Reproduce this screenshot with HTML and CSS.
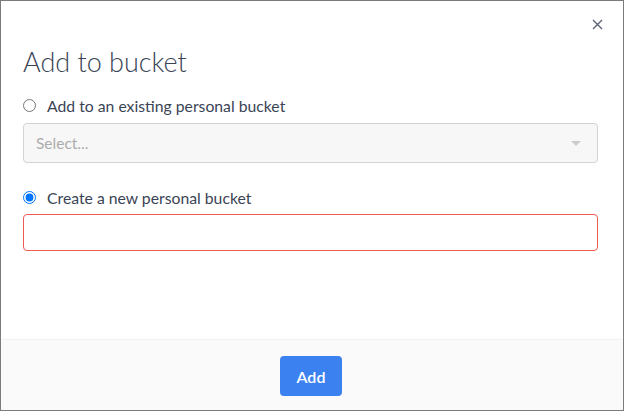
FILE: index.html
```html
<!DOCTYPE html>
<html>
<head>
<meta charset="utf-8">
<link rel="stylesheet" href="styles.css">
</head>
<body>
<div class="modal">
  <button class="close" aria-label="Close">
    <svg width="11" height="11" viewBox="0 0 11 11"><path d="M1 1L10 10M10 1L1 10" stroke="#5b6576" stroke-width="1.4" fill="none"/></svg>
  </button>
  <div class="modal-body">
    <h1 class="title">Add to bucket</h1>
    <label class="radio-row first">
      <input type="radio" name="mode" class="radio">
      <span class="radio-label">Add to an existing personal bucket</span>
    </label>
    <div class="select">
      <span class="placeholder">Select...</span>
      <span class="caret"></span>
    </div>
    <label class="radio-row second">
      <input type="radio" name="mode" class="radio" checked>
      <span class="radio-label">Create a new personal bucket</span>
    </label>
    <input type="text" class="text-input">
  </div>
  <div class="modal-footer">
    <button class="btn-add">Add</button>
  </div>
</div>
</body>
</html>
```
FILE: styles.css
```css
html, body {
  margin: 0;
  padding: 0;
  background: #ffffff;
}
body {
  font-family: Lato, "Open Sans", sans-serif;
}
.modal {
  position: relative;
  box-sizing: border-box;
  width: 624px;
  height: 411px;
  border: 1px solid #7b7b7b;
  background: #ffffff;
  display: flex;
  flex-direction: column;
}
.close {
  position: absolute;
  top: 18px;
  right: 20px;
  width: 11px;
  height: 11px;
  padding: 0;
  border: 0;
  background: transparent;
  display: flex;
}
.modal-body {
  flex: 1;
  padding: 44px 25px 0 22px;
  display: flex;
  flex-direction: column;
}
.title {
  margin: 0;
  font-family: Lato, sans-serif;
  font-weight: 300;
  font-size: 27px;
  line-height: 34px;
  color: #3a4455;
}
.radio-row {
  display: flex;
  align-items: center;
  height: 20px;
  gap: 11px;
}
.radio-row.first {
  margin-top: 16px;
}
.radio-row.second {
  margin-top: 24px;
}
.radio {
  margin: 0;
  width: 13px;
  height: 13px;
}
.radio-label {
  font-size: 15.75px;
  color: #3a4455;
}
.select {
  margin-top: 8px;
  box-sizing: border-box;
  height: 40px;
  border: 1px solid #d3d3d3;
  border-radius: 4px;
  background: #f7f7f7;
  display: flex;
  align-items: center;
  justify-content: space-between;
  padding: 0 16px 0 12px;
}
.placeholder {
  font-size: 15.5px;
  color: #acacac;
}
.caret {
  width: 0;
  height: 0;
  border-left: 5px solid transparent;
  border-right: 5px solid transparent;
  border-top: 5px solid #cccccc;
}
.text-input {
  margin-top: 7px;
  box-sizing: border-box;
  height: 37px;
  width: 100%;
  border: 1px solid #ec5b53;
  border-radius: 4px;
  background: #ffffff;
  outline: none;
  font-family: Lato, sans-serif;
  font-size: 16px;
}
.modal-footer {
  height: 71px;
  background: #fafafa;
  border-top: 1px solid #f2f2f2;
  box-sizing: border-box;
  display: flex;
  justify-content: center;
  align-items: flex-start;
  padding: 16px 2px 0 0;
}
.btn-add {
  width: 62px;
  height: 40px;
  border: 0;
  border-radius: 4px;
  background: #3b82f0;
  color: #ffffff;
  font-family: Lato, sans-serif;
  font-size: 16px;
  font-weight: 600;
  padding: 0;
}
```
